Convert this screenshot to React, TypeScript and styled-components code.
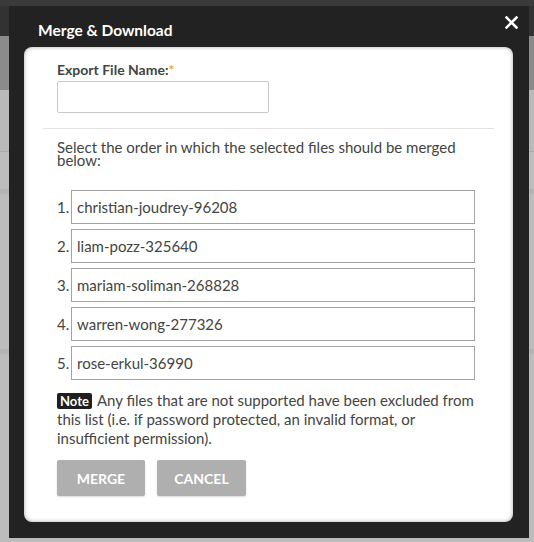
import React from "react";
import styled, { createGlobalStyle } from "styled-components";

const GlobalStyle = createGlobalStyle`
  html, body { margin: 0; padding: 0; }
  body { font-family: Lato, "Open Sans", Arial, sans-serif; background: #bcbcbc; }
  * { box-sizing: border-box; }
`;

const Page = styled.div`
  position: relative;
  width: 534px;
  height: 542px;
  overflow: hidden;
  background: #bcbcbc;
  display: flex;
  flex-direction: column;
`;

const TopBar = styled.div`
  height: 36px;
  background: #323232;
  border-top: 6px solid #3a3a3a;
  flex-shrink: 0;
`;

const ToolBar = styled.div`
  height: 54px;
  background: #8b8b8b;
  flex-shrink: 0;
`;

const BackRow = styled.div<{ $h: number; $bg: string; $line: string }>`
  height: ${(p) => p.$h}px;
  background: ${(p) => p.$bg};
  border-bottom: ${(p) => p.$line};
  flex-shrink: 0;
`;

const Modal = styled.div`
  position: absolute;
  left: 9px;
  top: 6px;
  width: 520px;
  height: 532px;
  background: #222222;
  display: flex;
  flex-direction: column;
  padding: 0 16px 16px 15px;
`;

const Header = styled.div`
  height: 41px;
  flex-shrink: 0;
  padding: 14px 0 0 14px;
  color: #ffffff;
  font-size: 15.5px;
  line-height: 20px;
  font-weight: 700;
`;

const CloseButton = styled.button`
  position: absolute;
  right: 11px;
  top: 9px;
  width: 14px;
  height: 14px;
  padding: 0;
  border: none;
  background: transparent;
  cursor: pointer;
  display: flex;
  align-items: center;
  justify-content: center;
`;

const Panel = styled.div`
  flex: 1;
  background: #ffffff;
  border-radius: 8px;
  box-shadow: inset 0 0 4px rgba(0, 0, 0, 0.35);
  padding: 14px 33px 0 33px;
  display: flex;
  flex-direction: column;
  color: #444444;
  font-size: 15px;
`;

const Label = styled.label`
  font-weight: 700;
  font-size: 14px;
  line-height: 18px;
  color: #444444;
`;

const Required = styled.span`
  color: #f3a32c;
`;

const NameInput = styled.input`
  margin-top: 2px;
  width: 212px;
  height: 32px;
  border: 1px solid #c9c9c9;
  border-radius: 2px;
  font-family: inherit;
  font-size: 15px;
  padding: 0 6px;
  outline: none;
`;

const Divider = styled.hr`
  margin: 15px -14px 0 -14px;
  border: none;
  border-top: 1px solid #e2e2e2;
  height: 0;
`;

const Instructions = styled.p`
  margin: 12px 0 0 0;
  font-size: 15px;
  line-height: 13px;
  color: #444444;
`;

const FileList = styled.ol`
  list-style: none;
  margin: 23px 0 0 0;
  padding: 0;
  display: flex;
  flex-direction: column;
  gap: 5px;
`;

const FileRow = styled.li`
  display: flex;
  align-items: center;
`;

const Index = styled.span`
  width: 14px;
  font-size: 15px;
  color: #444444;
`;

const FileBox = styled.div`
  width: 404px;
  height: 34px;
  border: 1px solid #a3a3a3;
  padding: 0 5px;
  display: flex;
  align-items: center;
  font-size: 15px;
  color: #444444;
`;

const NoteText = styled.p`
  margin: 11px 0 0 0;
  font-size: 15px;
  line-height: 19px;
  color: #444444;
`;

const NoteBadge = styled.span`
  display: inline-block;
  background: #1f1f1f;
  color: #ffffff;
  font-weight: 700;
  font-size: 13px;
  line-height: 16px;
  padding: 0 3px;
  border-radius: 2px;
  margin-right: 5px;
`;

const Actions = styled.div`
  display: flex;
  gap: 12px;
  margin-top: 12px;
`;

const ActionButton = styled.button<{ $w: number }>`
  width: ${(p) => p.$w}px;
  height: 36px;
  border: none;
  border-radius: 2px;
  background: #afafaf;
  color: #ffffff;
  font-family: inherit;
  font-weight: 700;
  font-size: 14px;
  text-transform: uppercase;
  box-shadow: 0 1px 2px rgba(0, 0, 0, 0.15);
  cursor: pointer;
`;

const files = [
  "christian-joudrey-96208",
  "liam-pozz-325640",
  "mariam-soliman-268828",
  "warren-wong-277326",
  "rose-erkul-36990",
];

export default function App() {
  return (
    <>
      <GlobalStyle />
      <Page>
        <TopBar />
        <ToolBar />
        <BackRow $h={62} $bg="#b9b9b9" $line="1px solid #a9a9a9" />
        <BackRow $h={42} $bg="#bdbdbd" $line="5px solid #b3b3b3" />
        <BackRow $h={160} $bg="#bcbcbc" $line="5px solid #b3b3b3" />
        <BackRow $h={180} $bg="#bcbcbc" $line="none" />
        <Modal>
          <Header>Merge &amp; Download</Header>
          <CloseButton aria-label="Close">
            <svg width="13" height="13" viewBox="0 0 13 13">
              <path d="M1.5 1.5 L11.5 11.5 M11.5 1.5 L1.5 11.5" stroke="#ffffff" strokeWidth="2.6" strokeLinecap="square" />
            </svg>
          </CloseButton>
          <Panel>
            <Label>
              Export File Name:<Required>*</Required>
            </Label>
            <NameInput type="text" />
            <Divider />
            <Instructions>
              Select the order in which the selected files should be merged below:
            </Instructions>
            <FileList>
              {files.map((f, i) => (
                <FileRow key={f}>
                  <Index>{i + 1}.</Index>
                  <FileBox>{f}</FileBox>
                </FileRow>
              ))}
            </FileList>
            <NoteText>
              <NoteBadge>Note</NoteBadge>Any files that are not supported have been excluded from this list (i.e. if password protected, an invalid format, or insufficient permission).
            </NoteText>
            <Actions>
              <ActionButton $w={88}>Merge</ActionButton>
              <ActionButton $w={89}>Cancel</ActionButton>
            </Actions>
          </Panel>
        </Modal>
      </Page>
    </>
  );
}
